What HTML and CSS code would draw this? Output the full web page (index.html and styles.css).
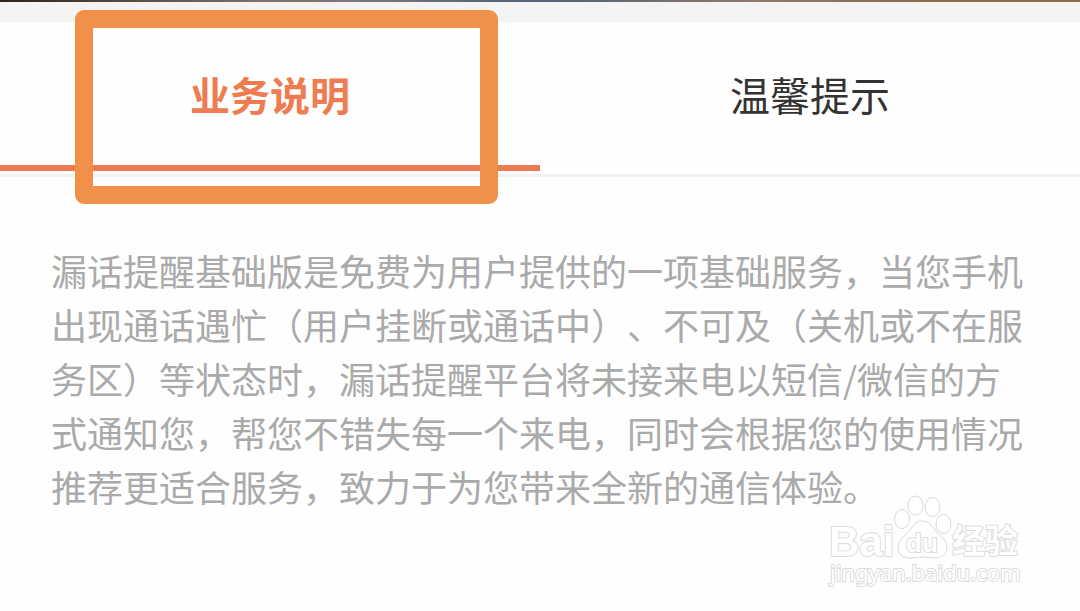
FILE: index.html
```
<!DOCTYPE html>
<html lang="zh-CN">
<head>
    <meta charset="UTF-8">
    <meta name="viewport" content="width=device-width, initial-scale=1.0">
    <title>漏话提醒</title>
    <link rel="stylesheet" href="styles.css">
</head>
<body>
    <div class="banner"></div>

    <!-- Tabs -->
    <nav class="tabs">
        <button class="tab active" type="button">业务说明<span class="highlight"></span></button>
        <button class="tab" type="button">温馨提示</button>
    </nav>

    <main class="content">
        <p>漏话提醒基础版是免费为用户提供的一项基础服务，当您手机出现通话遇忙（用户挂断或通话中）、不可及（关机或不在服务区）等状态时，漏话提醒平台将未接来电以短信/微信的方式通知您，帮您不错失每一个来电，同时会根据您的使用情况推荐更适合服务，致力于为您带来全新的通信体验。</p>
    </main>

    <!-- Watermark -->
    <svg class="watermark" width="210" height="100" viewBox="0 0 210 100">
        <g class="mark">
            <text class="logo" x="9" y="65">Bai</text>
            <ellipse cx="82" cy="28" rx="7.500" ry="9.500"/>
            <ellipse cx="95.500" cy="14.500" rx="7.500" ry="9.500"/>
            <ellipse cx="112.500" cy="16" rx="7.500" ry="9.500"/>
            <ellipse cx="123.500" cy="33" rx="7.500" ry="9.500"/>
            <path d="M102 30C96 30 93 35 90 39C86 45 78 48 78 57C78 63 83 67 89 67C94 67 98 66 102 66C107 66 111 67 116 67C122 67 127 63 127 57C127 48 119 45 115 39C112 35 108 30 102 30Z"/>
            <text class="du" x="86" y="61">du</text>
            <text class="cn" x="132" y="62">经验</text>
            <text class="url" x="10" y="90">jingyan.baidu.com</text>
        </g>
    </svg>
</body>
</html>
```
FILE: styles.css
```
* {
    box-sizing: border-box;
}

body {
    margin: 0;
    min-height: 100vh;
    position: relative;
    background-color: #fefefe;
    font-family: 'Noto Sans CJK SC', sans-serif;
}

.banner {
    height: 22px;
    background: linear-gradient(90deg, #2b231d, #5b4c3c 12%, #857168 25%, #7d7678 33%, #506478 48%, #5c6873 55%, #93796a 70%, #8b6a49 85%, #8b6a49) top / 100% 2px no-repeat #f4f4f4;
}

.tabs {
    display: flex;
    border-bottom: 3px solid #f2f2f2;
}

.tab {
    flex: 1;
    position: relative;
    height: 152px;
    padding: 0 0 8px;
    border: none;
    background: none;
    color: #333;
    font-family: inherit;
    font-size: 40px;
    line-height: 60px;
    cursor: pointer;
}

.tab.active {
    color: #ef7b50;
    font-weight: bold;
}

.tab.active::after {
    content: '';
    position: absolute;
    left: 0;
    right: 0;
    bottom: 3px;
    height: 6px;
    background-color: #ed7b51;
}

/* frame drawn over the active tab */
.highlight {
    position: absolute;
    z-index: 1;
    top: -12px;
    bottom: -30px;
    left: 75px;
    right: 42px;
    border: 18px solid #f19149;
    border-radius: 9px;
}

.content {
    padding: 66px 51px;
}

.content p {
    margin: 0;
    color: #aaa;
    font-size: 36px;
    line-height: 54px;
    text-spacing-trim: space-all;
}

.watermark {
    position: absolute;
    right: 50px;
    bottom: 20px;
}

.mark {
    fill: #fff;
    stroke: #d8d8d8;
    stroke-width: 1px;
}

.mark text {
    stroke: #dcdcdc;
    stroke-width: 2px;
    paint-order: stroke;
}

.logo, .du {
    font-family: 'Liberation Sans', sans-serif;
    font-weight: bold;
}

.logo { font-size: 42px; }
.du { font-size: 26px; }

.cn {
    font-size: 33px;
    font-weight: bold;
}

.url {
    font-family: 'Noto Sans', sans-serif;
    font-size: 22px;
}
```
